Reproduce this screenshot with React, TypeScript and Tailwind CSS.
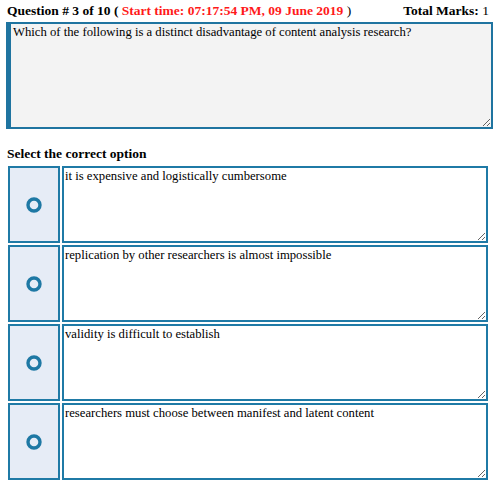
import { useState } from 'react';

const options = [
    'it is expensive and logistically cumbersome',
    'replication by other researchers is almost impossible',
    'validity is difficult to establish',
    'researchers must choose between manifest and latent content',
];

function RadioRing() {
    return (
        <svg width="16" height="16" viewBox="0 0 16 16">
            <circle cx="8" cy="8" r="6" fill="none" stroke="#1e78a4" strokeWidth="3.4" />
        </svg>
    );
}

export default function App() {
    const [selected, setSelected] = useState<number | null>(null);

    return (
        <div className="w-[497px] h-[487px] bg-white text-black font-['Liberation_Serif',serif]">
            <div className="flex justify-between items-center pl-[7px] pr-[8px] pt-[3px] h-[19px] text-[13.5px] leading-[16px]">
                <div className="font-bold">
                    Question # 3 of 10 ( <span className="text-[#ff1a1a]">Start time: 07:17:54 PM, 09 June 2019</span> <span className="font-normal">)</span>
                </div>
                <div>
                    <span className="font-bold">Total Marks:</span> 1
                </div>
            </div>

            <textarea
                readOnly
                value="Which of the following is a distinct disadvantage of content analysis research?"
                className="block ml-[6px] mt-[3px] w-[487px] h-[107px] bg-[#f3f3f3] border-2 border-[#1f74a0] border-l-[5px] pl-[2px] pt-[1px] text-[12.7px] leading-[15px] resize-y outline-none font-['Liberation_Serif',serif]"
            />

            <div className="pl-[7px] mt-[17px] h-[20px] font-bold text-[13.5px] leading-[16px]">Select the correct option</div>

            <div className="flex flex-col gap-[2px] ml-[8px]">
                {options.map((opt, i) => (
                    <div key={i} className="flex gap-[2px] h-[77px]">
                        <button
                            onClick={() => setSelected(i)}
                            className="w-[52px] h-full bg-[#e6ecf6] border-2 border-[#1f7aa6] flex items-center justify-center"
                        >
                            {selected === i ? (
                                <svg width="16" height="16" viewBox="0 0 16 16">
                                    <circle cx="8" cy="8" r="6" fill="#1e78a4" />
                                </svg>
                            ) : (
                                <RadioRing />
                            )}
                        </button>
                        <textarea
                            readOnly
                            value={opt}
                            className="w-[426px] h-full bg-white border-2 border-[#1f7aa6] pl-[1px] pt-[1px] text-[12.7px] leading-[15px] resize-y outline-none font-['Liberation_Serif',serif]"
                        />
                    </div>
                ))}
            </div>
        </div>
    );
}
